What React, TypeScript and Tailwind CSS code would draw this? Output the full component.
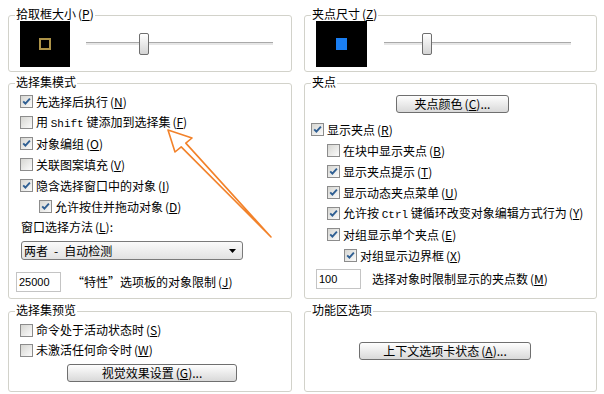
import React from "react";

function M({ c }: { c: string }) {
  return (
    <span className="ml-[2px]">
      (<span className="underline underline-offset-[1px]">{c}</span>)
    </span>
  );
}

function Box({ checked }: { checked: boolean }) {
  return (
    <span className="relative block w-[13px] h-[13px] shrink-0 border border-[#8c8c8c] bg-linear-to-br from-[#d6d6d2] to-[#fbfbfb]">
      {checked && (
        <svg className="absolute left-0 top-0" width="11" height="11" viewBox="0 0 11 11">
          <path d="M2.2 5.3 L4.4 7.6 L8.9 2.6" fill="none" stroke="#2f5f93" strokeWidth="1.9" />
        </svg>
      )}
    </span>
  );
}

function Check({
  checked,
  className,
  children,
}: {
  checked: boolean;
  className: string;
  children: React.ReactNode;
}) {
  return (
    <div className={`flex items-center gap-[3px] ${className}`}>
      <Box checked={checked} />
      <span className="leading-[14px] whitespace-nowrap">{children}</span>
    </div>
  );
}

function Group({
  title,
  className,
  children,
}: {
  title: React.ReactNode;
  className: string;
  children?: React.ReactNode;
}) {
  return (
    <div className={`relative border border-[#d2d2ca] rounded-[3px] ${className}`}>
      <span className="absolute top-[-9px] left-[6px] bg-white px-[1px] leading-[14px] whitespace-nowrap">
        {title}
      </span>
      {children}
    </div>
  );
}

function Slider({ thumb }: { thumb: string }) {
  return (
    <div className="relative w-[187px] h-[22px]">
      <div className="absolute left-0 right-0 top-[9px] h-[3px] border-t border-[#a9a9a9] bg-[#e6e6e6]" />
      <div
        className={`absolute top-0 w-[10px] h-[22px] rounded-[2px] border border-[#6e6e6e] bg-linear-to-b from-[#ffffff] to-[#d4d4d4] ${thumb}`}
      />
    </div>
  );
}

function Btn({ className, children }: { className: string; children: React.ReactNode }) {
  return (
    <div
      className={`h-[18px] flex items-center justify-center rounded-[3px] border border-[#6f6f6f] bg-linear-to-b from-[#fefefe] to-[#d9d9d9] leading-[14px] ${className}`}
    >
      {children}
    </div>
  );
}

export default function App() {
  return (
    <div className="relative w-[604px] h-[394px] overflow-hidden bg-white text-black text-[12px] font-['Noto_Sans_CJK_SC',sans-serif] pt-[15px] pl-[8px]">
      {/* Row 1 */}
      <div className="grid grid-cols-[284px_293px] gap-x-[12px]">
        <Group title={<>拾取框大小<M c="P" /></>} className="h-[57px] flex items-center pl-[11px]">
          <div className="w-[50px] h-[46px] bg-black flex items-center justify-center">
            <div className="w-[12px] h-[12px] border-2 border-[#ad9348]" />
          </div>
          <div className="ml-[16px]">
            <Slider thumb="left-[53px]" />
          </div>
        </Group>
        <Group title={<>夹点尺寸<M c="Z" /></>} className="h-[57px] flex items-center pl-[11px]">
          <div className="w-[51px] h-[46px] bg-black flex items-center justify-center">
            <div className="w-[11px] h-[12px] bg-[#1a7ef2]" />
          </div>
          <div className="ml-[17px]">
            <Slider thumb="left-[38px]" />
          </div>
        </Group>
      </div>

      {/* Row 2 */}
      <div className="grid grid-cols-[284px_293px] gap-x-[12px] mt-[11px]">
        <Group title="选择集模式" className="h-[216px] flex flex-col pt-[7px] pl-[11px]">
          <Check checked className="h-[21px]">先选择后执行<M c="N" /></Check>
          <Check checked={false} className="h-[21px]">
            用 <span className="font-['Liberation_Mono',monospace] text-[11px]">Shift</span> 键添加到选择集<M c="F" />
          </Check>
          <Check checked className="h-[21px]">对象编组<M c="O" /></Check>
          <Check checked={false} className="h-[21px]">关联图案填充<M c="V" /></Check>
          <Check checked className="h-[21px]">隐含选择窗口中的对象<M c="I" /></Check>
          <Check checked className="h-[21px] ml-[19px]">允许按住并拖动对象<M c="D" /></Check>
          <div className="h-[20px] flex items-center ml-[1px] leading-[14px]">
            窗口选择方法<M c="L" />:
          </div>
          <div className="mt-[4px] ml-[1px] w-[222px] h-[19px] rounded-[3px] border border-[#7a7a7a] bg-linear-to-b from-[#fafafa] to-[#e2e2e2] flex items-center justify-between pl-[2px] pr-[6px] leading-[14px]">
            <span>
              两者<span className="mx-[6px]">-</span>自动检测
            </span>
            <svg width="7" height="4" viewBox="0 0 7 4">
              <path d="M0 0 H7 L3.5 4 Z" fill="#000" />
            </svg>
          </div>
          <div className="mt-[12px] ml-[-4px] flex items-center">
            <div className="w-[45px] h-[20px] border border-[#c4c4c4] flex items-center pl-[2px] font-['Liberation_Sans',sans-serif] text-[11px]">
              25000
            </div>
            <span className="ml-[11px] leading-[14px]">“特性”选项板的对象限制<M c="J" /></span>
          </div>
        </Group>
        <Group title="夹点" className="h-[216px] flex flex-col">
          <Btn className="mt-[11px] ml-[91px] w-[113px]">夹点颜色<M c="C" />...</Btn>
          <div className="mt-[6px] flex flex-col">
            <Check checked className="h-[21px] ml-[6px]">显示夹点<M c="R" /></Check>
            <Check checked={false} className="h-[21px] ml-[22px]">在块中显示夹点<M c="B" /></Check>
            <Check checked className="h-[21px] ml-[22px]">显示夹点提示<M c="T" /></Check>
            <Check checked className="h-[21px] ml-[22px]">显示动态夹点菜单<M c="U" /></Check>
            <Check checked className="h-[21px] ml-[22px]">
              允许按 <span className="font-['Liberation_Mono',monospace] text-[11px]">Ctrl</span> 键循环改变对象编辑方式行为<M c="Y" />
            </Check>
            <Check checked className="h-[21px] ml-[22px]">对组显示单个夹点<M c="E" /></Check>
            <Check checked className="h-[21px] ml-[39px]">对组显示边界框<M c="X" /></Check>
          </div>
          <div className="mt-[3px] ml-[11px] flex items-center">
            <div className="w-[45px] h-[20px] border border-[#c4c4c4] flex items-center pl-[2px] font-['Liberation_Sans',sans-serif] text-[11px]">
              100
            </div>
            <span className="ml-[11px] leading-[14px]">选择对象时限制显示的夹点数<M c="M" /></span>
          </div>
        </Group>
      </div>

      {/* Row 3 */}
      <div className="grid grid-cols-[284px_293px] gap-x-[12px] mt-[12px]">
        <Group title="选择集预览" className="h-[81px] flex flex-col pt-[8px] pl-[11px]">
          <Check checked={false} className="h-[20px]">命令处于活动状态时<M c="S" /></Check>
          <Check checked={false} className="h-[20px]">未激活任何命令时<M c="W" /></Check>
          <Btn className="mt-[4px] ml-[47px] w-[170px]">视觉效果设置<M c="G" />...</Btn>
        </Group>
        <Group title="功能区选项" className="h-[81px] flex flex-col">
          <Btn className="mt-[30px] ml-[54px] w-[172px]">上下文选项卡状态<M c="A" />...</Btn>
        </Group>
      </div>

      {/* Annotation arrow */}
      <svg
        className="absolute left-0 top-0 pointer-events-none"
        width="604"
        height="394"
        viewBox="0 0 604 394"
      >
        <polygon
          points="168,130 192,138 185.8,143.1 271,237 181.2,146.9 175,152"
          fill="none"
          stroke="#f2822a"
          strokeWidth="1.6"
          strokeLinejoin="round"
        />
      </svg>
    </div>
  );
}
